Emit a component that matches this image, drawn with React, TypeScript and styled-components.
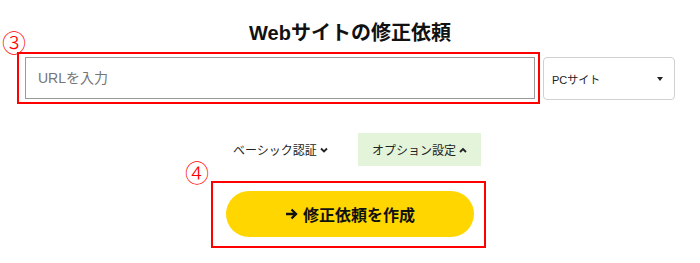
import React, { Component } from 'react';
import styled, { createGlobalStyle } from 'styled-components';

const GlobalStyle = createGlobalStyle`
  body {
    margin: 0;
    background: #fff;
    font-family: "Liberation Sans", "Noto Sans CJK JP", sans-serif;
    color: #111;
  }
`;

const Page = styled.div`
  width: 700px;
  padding-top: 22px;
`;

const Title = styled.h1`
  margin: 0;
  font-size: 20px;
  line-height: 22px;
  font-weight: bold;
  text-align: center;
  color: #111;
`;

const UrlRow = styled.div`
  display: flex;
  align-items: flex-start;
  gap: 3px;
  margin-top: 8px;
  padding-left: 17px;
`;

const Highlight = styled.div`
  position: relative;
  border: 2px solid #f00;
  padding: ${p => p.$pad};
`;

const Mark = styled.span`
  position: absolute;
  left: ${p => p.$left}px;
  top: ${p => p.$top}px;
  font-family: "Noto Sans CJK JP", sans-serif;
  font-size: 24px;
  line-height: 24px;
  color: #f00;
  font-weight: 300;
`;

const UrlInput = styled.input`
  display: block;
  box-sizing: border-box;
  width: 510px;
  height: 42px;
  border: 1px solid #9a9a9a;
  padding: 0 12px;
  font-family: inherit;
  font-size: 14px;
  color: #333;
  outline: none;

  &::placeholder {
    color: #757575;
  }
`;

const SelectBox = styled.div`
  box-sizing: border-box;
  display: flex;
  align-items: center;
  justify-content: space-between;
  width: 132px;
  height: 43px;
  margin-top: 5px;
  padding: 0 11px 0 8px;
  border: 1px solid #d0d0d0;
  border-radius: 4px;
  font-size: 11px;
  color: #222;
`;

const Caret = styled.span`
  width: 0;
  height: 0;
  border-left: 3.5px solid transparent;
  border-right: 3.5px solid transparent;
  border-top: 4px solid #222;
`;

const ToggleRow = styled.div`
  display: flex;
  justify-content: center;
  gap: 16px;
  margin-top: 29px;
`;

const Toggle = styled.button`
  display: flex;
  align-items: center;
  gap: 3px;
  height: 33px;
  padding: 0 14px;
  border: none;
  background: ${p => (p.$open ? '#e3f4da' : 'transparent')};
  font-family: inherit;
  font-size: 12px;
  color: #222;
  cursor: pointer;
`;

const SubmitWrap = styled.div`
  display: flex;
  justify-content: center;
  margin-top: 15px;
  padding-right: 3px;
`;

const SubmitButton = styled.button`
  display: flex;
  align-items: center;
  justify-content: center;
  gap: 5px;
  width: 248px;
  height: 46px;
  border: none;
  border-radius: 23px;
  background: #ffd600;
  font-family: inherit;
  font-size: 16px;
  font-weight: bold;
  color: #111;
  cursor: pointer;
`;

const Chevron = ({ up }: { up?: boolean }) => (
  <svg width="8" height="6" viewBox="0 0 8 6" style={{ display: 'block' }}>
    <path
      d={up ? 'M1 5 L4 2 L7 5' : 'M1 1.5 L4 4.5 L7 1.5'}
      fill="none"
      stroke="#222"
      strokeWidth="1.8"
    />
  </svg>
);

const Arrow = () => (
  <svg width="13" height="12" viewBox="0 0 13 12" style={{ display: 'block' }}>
    <path d="M1 6 H11.5 M6.5 1.5 L11 6 L6.5 10.5" fill="none" stroke="#111" strokeWidth="2.4" />
  </svg>
);

interface state {
  url: string;
  basicOpen: boolean;
  optionOpen: boolean;
}

export default class App extends Component<{}, state> {
  constructor(props) {
    super(props);
    this.state = { url: '', basicOpen: false, optionOpen: true };
  }

  render() {
    const { url, basicOpen, optionOpen } = this.state;
    return (
      <Page>
        <GlobalStyle />
        <Title>Webサイトの修正依頼</Title>
        <UrlRow>
          <Highlight $pad="3px 3px 3px 6px">
            <Mark $left={-17} $top={-24}>③</Mark>
            <UrlInput
              placeholder="URLを入力"
              value={url}
              onChange={e => this.setState({ url: e.currentTarget.value })}
            />
          </Highlight>
          <SelectBox>
            <span>PCサイト</span>
            <Caret />
          </SelectBox>
        </UrlRow>
        <ToggleRow>
          <Toggle $open={basicOpen} onClick={() => this.setState({ basicOpen: !basicOpen })}>
            ベーシック認証<Chevron up={basicOpen} />
          </Toggle>
          <Toggle $open={optionOpen} onClick={() => this.setState({ optionOpen: !optionOpen })}>
            オプション設定<Chevron up={optionOpen} />
          </Toggle>
        </ToggleRow>
        <SubmitWrap>
          <Highlight $pad="8px 10px 9px 13px">
            <Mark $left={-28} $top={-23}>④</Mark>
            <SubmitButton>
              <Arrow />
              修正依頼を作成
            </SubmitButton>
          </Highlight>
        </SubmitWrap>
      </Page>
    );
  }
}
